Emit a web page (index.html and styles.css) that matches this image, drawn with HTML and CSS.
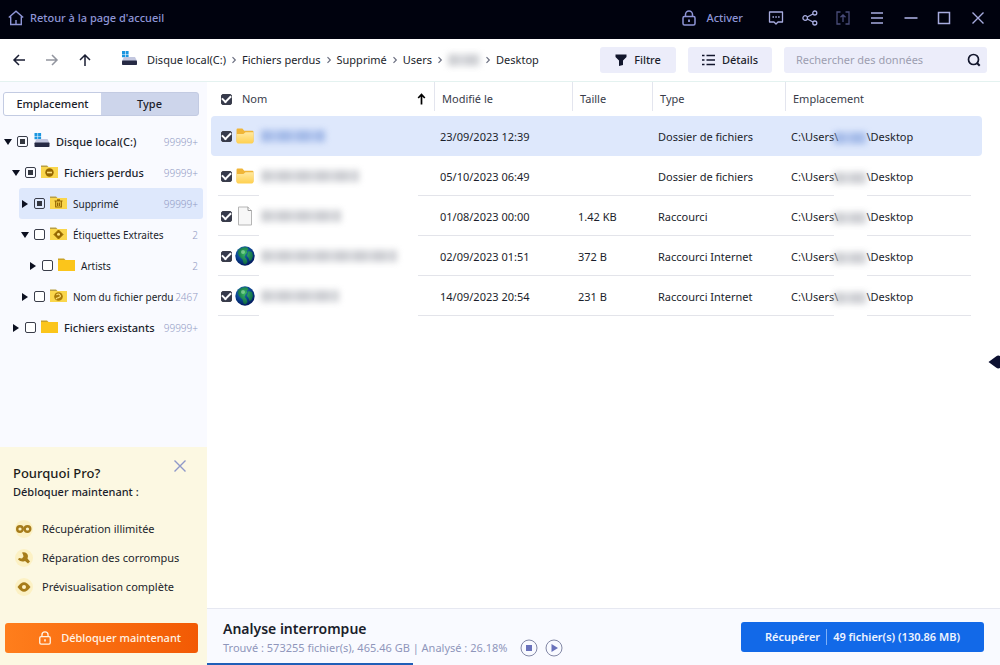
FILE: index.html
```
<!DOCTYPE html>
<html lang="fr">
<head>
  <meta charset="UTF-8" />
  <meta name="viewport" content="width=device-width, initial-scale=1.0" />
  <title>Récupération de données</title>
  <link rel="stylesheet" href="styles.css">
</head>
<body>
  <!-- shared icons -->
  <svg class="sprite" aria-hidden="true">
    <defs>
      <linearGradient id="folderFill" x1="0" y1="0" x2="0" y2="1">
        <stop offset="0" stop-color="#ffe9a0" /><stop offset="1" stop-color="#ffd04f" />
      </linearGradient>
      <radialGradient id="globeFill" cx="0.4" cy="0.3" r="0.7">
        <stop offset="0" stop-color="#2f9a80" /><stop offset="0.5" stop-color="#0b4a98" /><stop offset="1" stop-color="#021a5c" />
      </radialGradient>
      <radialGradient id="landFill" cx="0.5" cy="0.4" r="0.6">
        <stop offset="0" stop-color="#3fc45a" /><stop offset="1" stop-color="#0b6b3a" />
      </radialGradient>
    </defs>
    <symbol id="disk" viewBox="0 0 17 15">
      <path d="M1 0h3v3H1zM4.600 0h3v3h-3zM1 3.600h3v2.600H1zM4.600 3.600h3v2.600h-3z" fill="#1b96e0" />
      <path d="M3 6h11l2 4H1z" fill="#c3c7df" />
      <rect x="1" y="9.500" width="15" height="4.500" rx="0.800" fill="#262a44" />
    </symbol>
    <symbol id="folder" viewBox="0 0 18 14">
      <path d="M0 1h6l1.500 1.500H0z" fill="#c9a227" />
      <path d="M0 2.500h17V13.500H0z" fill="#fbc51b" />
    </symbol>
    <symbol id="folderSoft" viewBox="0 0 18 14">
      <path d="M0 1h6l1.500 1.500H0z" fill="#b99f45" />
      <path d="M0 2.500h17V13.500H0z" fill="#fad64c" />
    </symbol>
    <symbol id="folderOpen" viewBox="0 0 17 15">
      <path d="M0.500 1.500q0-1 1-1h4.500l1.800 2h7.700q1 0 1 1V13H0.500z" fill="#f0b537" />
      <path d="M0.500 5.500h6.500l2-1.500h7.500v9q0 1.500-1.500 1.500H2q-1.500 0-1.500-1.500z" fill="url(#folderFill)" />
    </symbol>
    <symbol id="page" viewBox="0 0 16 20">
      <path d="M1.500 1h9.500l3.500 3.500V19h-13z" fill="#f7f7f7" stroke="#b5b5b5" />
      <path d="M11 1v3.500h3.500" fill="#fff" stroke="#999" />
    </symbol>
    <symbol id="globe" viewBox="0 0 20 20">
      <circle cx="10" cy="10" r="9.700" fill="url(#globeFill)" />
      <path d="M3.500 4q4-3.500 9-2.500l1 2-2 1 1 2-2 1.500-1 3 2 2 1 3-2 2.500-2-1-1-4-3-3-1.500-3zM13.500 5l3.500 1 1 4-1.500 4-2 1-1-3-1.500-2z" fill="url(#landFill)" opacity="0.850" />
      <circle cx="8" cy="6" r="2" fill="#b6f0c0" opacity="0.500" />
    </symbol>
    <symbol id="lock" viewBox="0 0 16 16">
      <path d="M4.500 6.500V4.500a3.500 3.500 0 0 1 7 0v2" fill="none" stroke="currentColor" stroke-width="1.500" />
      <rect x="2" y="6.500" width="12" height="8.500" rx="1.500" fill="none" stroke="currentColor" stroke-width="1.500" />
      <path d="M8 9.500v2.500" stroke="currentColor" stroke-width="1.800" />
    </symbol>
    <symbol id="chevron" viewBox="0 0 6 8">
      <path d="M1.500 1.200 4.300 4 1.500 6.800" fill="none" stroke="#6b6f80" stroke-width="1.200" />
    </symbol>
    <symbol id="cross" viewBox="0 0 16 16">
      <path d="M2.500 2.500l11 11M13.500 2.500l-11 11" fill="none" stroke="currentColor" stroke-width="1.400" />
    </symbol>
  </svg>

  <header class="titlebar">
    <a class="home" href="#">
      <svg width="16" height="16" viewBox="0 0 16 16"><path d="M0.800 7.500 8 1.200l7.200 6.300M2.700 6.500v8h10.600v-8M8 10v4.500" fill="none" stroke="currentColor" stroke-width="1.400" /></svg>
      Retour à la page d'accueil
    </a>
    <button class="activate"><svg width="16" height="18"><use href="#lock" /></svg>Activer</button>
    <div class="window-buttons">
      <button aria-label="Messages"><svg viewBox="0 0 16 16"><path d="M1.500 2h13v10H10l-2 2-2-2H1.500z" fill="none" stroke="currentColor" stroke-width="1.300" stroke-linejoin="round" /><path d="M4.500 7h1.500M7.300 7h1.500M10.100 7h1.500" stroke="currentColor" stroke-width="1.500" /></svg></button>
      <button aria-label="Partager"><svg viewBox="0 0 16 16" fill="none" stroke="currentColor" stroke-width="1.300"><circle cx="3.200" cy="8" r="2.300" /><circle cx="12.800" cy="3" r="2" /><circle cx="12.800" cy="13" r="2" /><path d="M5.300 7l5.700-3M5.300 9l5.700 3" /></svg></button>
      <button class="dim" aria-label="Exporter"><svg viewBox="0 0 16 16" fill="none" stroke="currentColor" stroke-width="1.300"><path d="M5.500 2H2v12h3.500M10.500 2H14v12h-3.500M8 12V5M5.500 7.300 8 4.800l2.500 2.500" /></svg></button>
      <button aria-label="Menu"><svg viewBox="0 0 16 16"><path d="M2 3h12M2 8h12M2 13h12" stroke="currentColor" stroke-width="1.400" /></svg></button>
      <button aria-label="Réduire"><svg viewBox="0 0 16 16"><path d="M1.500 8h13" stroke="currentColor" stroke-width="1.600" /></svg></button>
      <button aria-label="Agrandir"><svg viewBox="0 0 16 16"><rect x="2.500" y="2.500" width="11" height="11" fill="none" stroke="currentColor" stroke-width="1.500" /></svg></button>
      <button aria-label="Fermer"><svg><use href="#cross" /></svg></button>
    </div>
  </header>

  <div class="toolbar">
    <div class="arrows">
      <button aria-label="Précédent"><svg viewBox="0 0 14 14"><path d="M13 7H2M7 2 2 7l5 5" /></svg></button>
      <button class="off" aria-label="Suivant"><svg viewBox="0 0 14 14"><path d="M1 7h11M7 2l5 5-5 5" /></svg></button>
      <button aria-label="Dossier parent"><svg viewBox="0 0 14 14"><path d="M7 13V2M2 7l5-5 5 5" /></svg></button>
    </div>
    <svg class="disk" width="17" height="15"><use href="#disk" /></svg>
    <nav class="crumbs">
      <a href="#">Disque local(C:)</a><svg><use href="#chevron" /></svg>
      <a href="#">Fichiers perdus</a><svg><use href="#chevron" /></svg>
      <a href="#">Supprimé</a><svg><use href="#chevron" /></svg>
      <a href="#">Users</a><svg><use href="#chevron" /></svg>
      <a href="#" aria-label="Utilisateur"><span class="smudge user"></span></a><svg><use href="#chevron" /></svg>
      <a href="#">Desktop</a>
    </nav>
    <button class="tool filter"><svg width="12" height="12" viewBox="0 0 12 12"><path d="M0.500 0.500h11v2.500L8 6.500V11L4 12V6.500L0.500 3z" fill="#12162c" /></svg>Filtre</button>
    <button class="tool details"><svg width="13" height="12" viewBox="0 0 13 12"><path d="M0 1.500h2.500M4.500 1.500H13M0 6h2.500M4.500 6H13M0 10.500h2.500M4.500 10.500H13" stroke="#12162c" stroke-width="1.700" /></svg>Détails</button>
    <div class="search">
      <input type="text" placeholder="Rechercher des données" aria-label="Rechercher des données" />
      <button aria-label="Rechercher"><svg width="14" height="14" viewBox="0 0 14 14"><circle cx="6.500" cy="6.500" r="5" fill="none" stroke="#12162c" stroke-width="1.700" /><path d="M10 10l2.700 2.700" stroke="#12162c" stroke-width="2" /></svg></button>
    </div>
  </div>

  <div class="content">
    <aside>
      <div class="tabs">
        <button class="active">Emplacement</button>
        <button>Type</button>
      </div>

      <ul class="tree">
        <li class="bold">
          <i class="caret down"></i><input type="checkbox" class="partial" id="t1" />
          <svg><use href="#disk" /></svg><label for="t1">Disque local(C:)</label><span class="count">99999+</span>
        </li>
        <li class="l1 bold">
          <i class="caret down"></i><input type="checkbox" class="partial" id="t2" />
          <svg viewBox="0 0 18 14"><use href="#folderSoft" /><circle cx="8.500" cy="8" r="4.200" fill="#946600" /><path d="M6 8h5" stroke="#ffe27a" stroke-width="1.600" /></svg>
          <label for="t2">Fichiers perdus</label><span class="count">99999+</span>
        </li>
        <li class="l2 selected">
          <i class="caret"></i><input type="checkbox" class="partial" id="t3" />
          <svg viewBox="0 0 18 14"><use href="#folderSoft" /><path d="M4.500 5.500h8M7 4.300h3M5.700 6v5.500h5.600V6M7.600 7v3.500M9.400 7v3.500" fill="none" stroke="#946600" stroke-width="1.200" /></svg>
          <label for="t3">Supprimé</label><span class="count">99999+</span>
        </li>
        <li class="l2">
          <i class="caret down"></i><input type="checkbox" id="t4" />
          <svg viewBox="0 0 18 14"><use href="#folderSoft" /><path d="M8.500 3.500 13 8l-4.500 4.500L4 8z" fill="#946600" stroke="#946600" stroke-linejoin="round" /><circle cx="8.500" cy="7.800" r="1.500" fill="#ffe27a" /></svg>
          <label for="t4">Étiquettes Extraites</label><span class="count">2</span>
        </li>
        <li class="l3">
          <i class="caret"></i><input type="checkbox" id="t5" />
          <svg><use href="#folder" /></svg><label for="t5">Artists</label><span class="count">2</span>
        </li>
        <li class="l2">
          <i class="caret"></i><input type="checkbox" id="t6" />
          <svg viewBox="0 0 18 14"><use href="#folderSoft" /><circle cx="8.500" cy="8" r="4.300" fill="#a87a08" /><path d="M6.500 6.500q2-2 3.500 0t-2 2.500v1M6 10.500l1-1" fill="none" stroke="#ffe27a" stroke-width="1.200" /></svg>
          <label for="t6">Nom du fichier perdu</label><span class="count">2467</span>
        </li>
        <li class="l1 bold">
          <i class="caret"></i><input type="checkbox" id="t7" />
          <svg><use href="#folder" /></svg><label for="t7">Fichiers existants</label><span class="count">99999+</span>
        </li>
      </ul>

      <section class="promo">
        <div class="promo-head">
          <h2>Pourquoi Pro?</h2>
          <button aria-label="Fermer"><svg width="16" height="16"><use href="#cross" /></svg></button>
        </div>
        <h3>Débloquer maintenant :</h3>
        <ul>
          <li><svg viewBox="0 0 20 20"><circle cx="10" cy="10" r="9" fill="#fcf1c4" /><circle cx="6" cy="10" r="2.800" fill="none" stroke="#a67c1a" stroke-width="2.400" /><circle cx="13.500" cy="10" r="2.800" fill="none" stroke="#a67c1a" stroke-width="2.400" /></svg>Récupération illimitée</li>
          <li><svg viewBox="0 0 20 20"><circle cx="10" cy="10" r="9" fill="#fcf1c4" /><path d="M8 4.500q5-1 6 3.500l-0.500 2.500 2.500 3-2 2-3-2.500q-4 1.500-7-1.500l1-1.500 3 0.500 1.500-2-0.500-2z" fill="#a67c1a" /></svg>Réparation des corrompus</li>
          <li><svg viewBox="0 0 20 20"><circle cx="10" cy="10" r="9" fill="#fcf1c4" /><path d="M3.500 10q6.500-9.500 13 0-6.500 9.500-13 0z" fill="#a67c1a" /><circle cx="10" cy="10" r="2" fill="#fff3c4" /></svg>Prévisualisation complète</li>
        </ul>
        <button class="unlock"><svg width="14" height="14"><use href="#lock" /></svg>Débloquer maintenant</button>
      </section>
    </aside>

    <main>
      <div class="files">
        <table>
          <colgroup><col class="c-name" /><col class="c-date" /><col class="c-size" /><col class="c-type" /><col /></colgroup>
          <thead>
            <tr>
              <th>
                <div class="name-head">
                  <input type="checkbox" id="all" checked /><label for="all">Nom</label>
                  <svg width="9" height="12" viewBox="0 0 9 12"><path d="M4.500 11.500V2M1.200 5l3.300-3.500L7.800 5" fill="none" stroke="#000" stroke-width="1.700" /></svg>
                </div>
              </th>
              <th>Modifié le</th><th>Taille</th><th>Type</th><th>Emplacement</th>
            </tr>
          </thead>
          <tbody>
            <tr class="selected">
              <td><div class="name"><input type="checkbox" checked aria-label="Fichier 1" /><svg class="small"><use href="#folderOpen" /></svg><span class="smudge n1"></span></div></td>
              <td>23/09/2023 12:39</td><td></td><td>Dossier de fichiers</td><td>C:\Users\<span class="smudge path"></span>\Desktop</td>
            </tr>
            <tr>
              <td><div class="name"><input type="checkbox" checked aria-label="Fichier 2" /><svg class="small"><use href="#folderOpen" /></svg><span class="smudge n2"></span></div></td>
              <td>05/10/2023 06:49</td><td></td><td>Dossier de fichiers</td><td>C:\Users\<span class="smudge path"></span>\Desktop</td>
            </tr>
            <tr>
              <td><div class="name"><input type="checkbox" checked aria-label="Fichier 3" /><svg><use href="#page" /></svg><span class="smudge n3"></span></div></td>
              <td>01/08/2023 00:00</td><td>1.42 KB</td><td>Raccourci</td><td>C:\Users\<span class="smudge path"></span>\Desktop</td>
            </tr>
            <tr>
              <td><div class="name"><input type="checkbox" checked aria-label="Fichier 4" /><svg><use href="#globe" /></svg><span class="smudge n4"></span></div></td>
              <td>02/09/2023 01:51</td><td>372 B</td><td>Raccourci Internet</td><td>C:\Users\<span class="smudge path"></span>\Desktop</td>
            </tr>
            <tr>
              <td><div class="name"><input type="checkbox" checked aria-label="Fichier 5" /><svg><use href="#globe" /></svg><span class="smudge n5"></span></div></td>
              <td>14/09/2023 20:54</td><td>231 B</td><td>Raccourci Internet</td><td>C:\Users\<span class="smudge path"></span>\Desktop</td>
            </tr>
          </tbody>
        </table>
        <button class="drawer" aria-label="Ouvrir l'aperçu"><svg width="12" height="14" viewBox="0 0 12 14"><path d="M0.500 7 8 1.500Q10 0 12 1v12q-2 1-4-0.500z" fill="#0c1030" /></svg></button>
      </div>

      <footer>
        <div class="status">
          <h1>Analyse interrompue</h1>
          <div class="status-line">
            <p>Trouvé : 573255 fichier(s), 465.46 GB | Analysé : 26.18%</p>
            <button aria-label="Arrêter"><svg viewBox="0 0 18 18"><circle cx="9" cy="9" r="8" fill="none" stroke="#8388a6" /><rect x="6" y="6" width="6" height="6" fill="#6a72bb" /></svg></button>
            <button aria-label="Reprendre"><svg viewBox="0 0 18 18"><circle cx="9" cy="9" r="8" fill="none" stroke="#8388a6" /><path d="M6.500 5 13 9l-6.500 4z" fill="#6a72bb" /></svg></button>
          </div>
        </div>
        <button class="recover"><span>Récupérer</span><span>49 fichier(s) (130.86 MB)</span></button>
        <div class="progress"><div style="width: 26%"></div></div>
      </footer>
    </main>
  </div>
</body>
</html>
```
FILE: styles.css
```
* {
  box-sizing: border-box;
}

body {
  margin: 0;
  height: 100vh;
  display: flex;
  flex-direction: column;
  font-family: "Noto Sans", "Open Sans", sans-serif;
  font-size: 11px;
  line-height: 16px;
  color: #1b1e2b;
  background: #fff;
}

button {
  font: inherit;
  color: inherit;
  background: none;
  border: none;
  padding: 0;
  cursor: pointer;
}

a {
  color: inherit;
  text-decoration: none;
}

h1, h2, h3, p, ul {
  margin: 0;
  padding: 0;
}

li {
  list-style: none;
}

svg {
  display: block;
  flex: none;
}

.sprite {
  position: absolute;
  width: 0;
  height: 0;
}

input[type="checkbox"] {
  appearance: none;
  flex: none;
  width: 11px;
  height: 11px;
  margin: 0;
  border: 1px solid #3a3d4a;
  border-radius: 2px;
  background: #fff;
}

input[type="checkbox"]:checked {
  background: #363a4c;
  display: flex;
  align-items: center;
  justify-content: center;
}

input[type="checkbox"]:checked::before {
  content: "";
  width: 7px;
  height: 4px;
  margin-bottom: 2px;
  border: solid #fff;
  border-width: 0 0 2px 2px;
  transform: rotate(-45deg);
}

input[type="checkbox"].partial {
  padding: 2px;
  background: #33363f content-box;
}

/* hidden names */
.smudge {
  display: inline-block;
  height: 12px;
  vertical-align: middle;
  background: repeating-linear-gradient(90deg, #b9bbc1, #b9bbc1 8px, #cdcfd4 13px, #bec0c6 19px);
  filter: blur(3px);
  opacity: 0.7;
}

.selected .smudge {
  background: repeating-linear-gradient(90deg, #8ba7e0, #8ba7e0 8px, #a6bdec 13px, #94aee3 19px);
}

.n1 { width: 64px; }
.n2 { width: 98px; }
.n3 { width: 80px; }
.n4 { width: 136px; }
.n5 { width: 78px; }
.user { width: 32px; display: block; }
.path { width: 33px; margin: 0 -1px 0 -4px; }

/* title bar */
.titlebar {
  display: flex;
  align-items: center;
  height: 39px;
  padding: 0 14px 4px 8px;
  background: #00020e;
  color: #8e95d6;
  font-weight: 500;
}

.home {
  display: flex;
  align-items: center;
  gap: 6px;
  margin-right: auto;
}

.activate {
  display: flex;
  align-items: center;
  gap: 9px;
  margin-right: 25px;
}

.window-buttons {
  width: 218px;
  display: flex;
  justify-content: space-between;
  color: #a7acdf;
}

.window-buttons svg {
  width: 16px;
  height: 16px;
}

.window-buttons .dim {
  color: #494d7a;
}

/* toolbar */
.toolbar {
  display: flex;
  align-items: center;
  height: 43px;
  padding: 0 13px 0 12px;
  border-bottom: 1px solid #e4f2f0;
}

.arrows {
  display: flex;
  gap: 19px;
  margin-right: 29px;
}

.arrows svg {
  width: 14px;
  height: 14px;
  fill: none;
  stroke: #1a1e33;
  stroke-width: 1.5;
}

.arrows .off svg {
  stroke: #92959f;
}

.disk {
  margin: 0 9px 4px 0;
}

.crumbs {
  display: flex;
  align-items: center;
  gap: 5px;
  margin-right: auto;
}

.crumbs svg {
  width: 6px;
  height: 8px;
}

.tool {
  display: flex;
  align-items: center;
  justify-content: center;
  gap: 7px;
  height: 26px;
  margin-right: 12px;
  border-radius: 3px;
  background: #ecedfa;
  font-weight: 500;
}

.filter {
  width: 76px;
}

.details {
  width: 84px;
}

.search {
  display: flex;
  align-items: center;
  width: 203px;
  height: 26px;
  padding: 0 6px 0 12px;
  border-radius: 3px;
  background: #ecedfa;
}

.search input {
  flex: 1;
  min-width: 0;
  padding: 0;
  border: none;
  background: none;
  font: inherit;
}

.search input::placeholder {
  color: #9c9eb0;
}

.content {
  flex: 1;
  display: flex;
  min-height: 0;
}

/* sidebar */
aside {
  width: 207px;
  flex: none;
  display: flex;
  flex-direction: column;
  background: #f9faff;
}

.tabs {
  display: flex;
  height: 24px;
  margin: 10px 8px 10px 3px;
  border: 1px solid #c3cbe2;
  border-radius: 3px;
  background: #cdd5eb;
  font-weight: 500;
}

.tabs button {
  flex: 1;
}

.tabs .active {
  background: #fff;
  border-radius: 2px 0 0 2px;
}

.tree li {
  display: flex;
  align-items: center;
  height: 31px;
  padding: 0 5px 0 4px;
  margin-right: 4px;
}

.tree .l1 {
  padding-left: 12px;
}

.tree .l2 {
  padding-left: 21px;
}

.tree .l3 {
  padding-left: 29px;
}

.tree .selected {
  margin-left: 19px;
  padding-left: 2px;
  border-radius: 3px;
  background: #dee8fc;
}

.tree svg {
  width: 18px;
  height: 15px;
  margin: 0 5px 3px 5px;
}

.tree label {
  white-space: nowrap;
  flex: 1;
  min-width: 0;
  font-size: 10px;
}

.tree .bold label {
  font-size: 11px;
  font-weight: 500;
}

.count {
  color: #929bc4;
  font-size: 10px;
  font-weight: 300;
}

.caret {
  width: 8px;
  margin-right: 5px;
  display: flex;
  justify-content: center;
}

.caret::before {
  content: "";
  border-left: 6px solid #0c1020;
  border-top: 4px solid transparent;
  border-bottom: 4px solid transparent;
}

.caret.down::before {
  border-top: 6px solid #0c1020;
  border-left: 4px solid transparent;
  border-right: 4px solid transparent;
  border-bottom: 0;
}

.promo {
  margin-top: auto;
  padding: 11px 9px 12px 5px;
  background: #fcf8e2;
}

.promo-head {
  display: flex;
  justify-content: space-between;
  align-items: flex-start;
  padding: 0 10px 0 8px;
  color: #8f99c9;
}

.promo h2 {
  margin-top: 5px;
  font-size: 13px;
  font-weight: 500;
  line-height: 20px;
  color: #1d1c1a;
}

.promo h3 {
  margin: 1px 8px 14px;
  font-size: 11px;
  font-weight: 500;
}

.promo li {
  display: flex;
  align-items: center;
  gap: 8px;
  height: 29px;
  padding-left: 9px;
}

.promo li svg {
  width: 20px;
  height: 20px;
}

.unlock {
  display: flex;
  align-items: center;
  justify-content: flex-end;
  gap: 9px;
  width: 100%;
  height: 30px;
  margin-top: 22px;
  padding-right: 17px;
  border-radius: 3px;
  background: linear-gradient(90deg, #ff7e1c, #f25a04);
  color: #fff3e4;
  font-weight: 500;
}

/* file list */
main {
  flex: 1;
  min-width: 0;
  display: flex;
  flex-direction: column;
}

.files {
  flex: 1;
  position: relative;
  padding: 0 18px 0 4px;
}

table {
  width: 100%;
  table-layout: fixed;
  border-collapse: collapse;
}

.c-name { width: 223px; }
.c-date { width: 138px; }
.c-size { width: 80px; }
.c-type { width: 133px; }

th {
  height: 34px;
  padding: 0 0 0 8px;
  text-align: left;
  font-weight: 400;
  color: #383b49;
  background: linear-gradient(#e3e5ee, #e3e5ee) 0 0 / 1px 29px no-repeat;
}

th:first-child {
  padding: 0;
  background: none;
}

.name-head {
  display: flex;
  align-items: center;
  gap: 10px;
  padding: 0 8px 0 10px;
}

.name-head svg {
  margin-left: auto;
}

td {
  height: 40px;
  padding: 1px 0 0 6px;
  white-space: nowrap;
}

td:first-child {
  padding: 0;
}

/* the row line stops under the hidden names */
tbody tr {
  --line: #e3e4ea;
  background: linear-gradient(90deg, transparent 7px, var(--line) 7px 48px, transparent 48px 207px, var(--line) 207px 623px, transparent 623px 656px, var(--line) 656px calc(100% - 11px), transparent calc(100% - 11px)) 0 100% / 100% 1px no-repeat;
}

tbody .selected {
  background: none;
}

tbody .selected td {
  background: #dee8fc;
}

tbody .selected td:first-child {
  border-radius: 4px 0 0 4px;
}

tbody .selected td:last-child {
  border-radius: 0 4px 4px 0;
}

.name {
  display: flex;
  align-items: center;
  padding-left: 10px;
}

.name svg {
  width: 20px;
  height: 20px;
  margin: 0 6px 0 3px;
}

.name .small {
  padding: 1px;
}

.drawer {
  position: absolute;
  right: 0;
  top: 273px;
}

/* status bar */
footer {
  position: relative;
  display: flex;
  align-items: center;
  justify-content: space-between;
  height: 57px;
  padding: 0 16px;
  border-top: 1px solid #e6e8f1;
  background: #f9faff;
}

footer h1 {
  font-size: 14px;
  font-weight: 600;
  line-height: 20px;
}

.status {
  padding-top: 2px;
}

.status-line {
  display: flex;
  align-items: center;
  gap: 7px;
  color: #8f96bb;
}

.status-line p {
  margin-right: 6px;
}

.status-line svg {
  width: 18px;
  height: 18px;
}

.recover {
  display: flex;
  align-items: center;
  justify-content: center;
  width: 243px;
  height: 30px;
  border-radius: 3px;
  background: #1269e8;
  color: #eef4ff;
  font-weight: 600;
}

.recover span + span {
  margin-left: 6px;
  padding-left: 6px;
  border-left: 1px solid #7fb0f7;
}

.progress {
  position: absolute;
  left: 0;
  right: 0;
  bottom: 0;
  height: 2px;
}

.progress div {
  height: 100%;
  background: #1f5fb8;
}
```
